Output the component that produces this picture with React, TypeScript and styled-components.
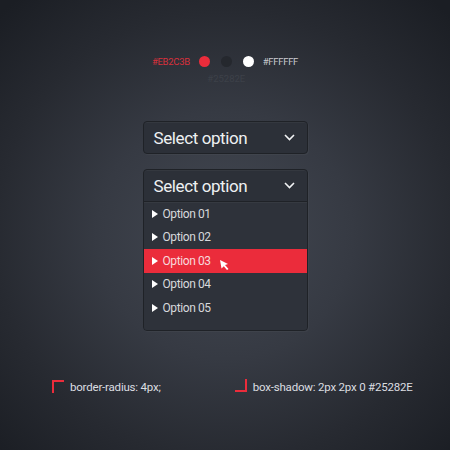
import React, { FC } from "react";
import styled, { createGlobalStyle } from "styled-components";

const GlobalStyle = createGlobalStyle`
  html, body {
    margin: 0;
    padding: 0;
  }
  body {
    width: 450px;
    height: 450px;
    overflow: hidden;
    font-family: Roboto, "Liberation Sans", sans-serif;
    background: radial-gradient(ellipse 320px 310px at 225px 235px, #434852 0%, #363a43 40%, #272a31 72%, #1b1e24 100%);
  }
`;

const Page = styled.div`
  width: 450px;
  height: 450px;
  display: flex;
  flex-direction: column;
  align-items: center;
`;

const Palette = styled.div`
  display: flex;
  align-items: center;
  gap: 11px;
  margin-top: 55px;
  height: 13px;
`;

const HexLabel = styled.span<{ $color: string; $side: "left" | "right" }>`
  font-size: 9.5px;
  letter-spacing: -0.3px;
  color: ${(p) => p.$color};
  margin: ${(p) => (p.$side === "left" ? "0 -2px 0 0" : "0 0 0 -2px")};
`;

const Swatch = styled.div<{ $color: string }>`
  position: relative;
  width: 11px;
  height: 11px;
  border-radius: 50%;
  background: ${(p) => p.$color};
`;

const SwatchCaption = styled.span`
  position: absolute;
  top: 17px;
  left: 50%;
  transform: translateX(-50%);
  font-size: 9.5px;
  color: #3d4149;
  white-space: nowrap;
`;

const Selects = styled.div`
  display: flex;
  flex-direction: column;
  gap: 15px;
  margin-top: 53px;
  width: 165px;
`;

const Box = styled.div`
  background: #2c3038;
  border: 1px solid #1f2227;
  border-radius: 4px;
  box-shadow: inset 0 1px 0 rgba(255, 255, 255, 0.04), 1px 1px 0 rgba(255, 255, 255, 0.03);
  overflow: hidden;
`;

const Header = styled.div<{ $open?: boolean }>`
  display: flex;
  align-items: center;
  justify-content: space-between;
  height: 31px;
  padding: 0 12px 0 10px;
  border-bottom: ${(p) => (p.$open ? "1px solid #1f2227" : "none")};
  color: #eef0f2;
  font-size: 17px;
  letter-spacing: -0.4px;
`;

const List = styled.div`
  display: flex;
  flex-direction: column;
  padding: 0 0 10px;
  background: #2e323a;
  box-shadow: inset 0 1px 0 rgba(255, 255, 255, 0.04);
`;

const Item = styled.div<{ $active?: boolean }>`
  position: relative;
  display: flex;
  align-items: center;
  gap: 5px;
  height: 23.5px;
  padding-left: 8px;
  font-size: 12px;
  letter-spacing: -0.4px;
  color: ${(p) => (p.$active ? "#f7d9dc" : "#d7d9dc")};
  background: ${(p) => (p.$active ? "#eb2c3b" : "transparent")};
`;

const Bullet = styled.span`
  width: 0;
  height: 0;
  border-top: 4px solid transparent;
  border-bottom: 4px solid transparent;
  border-left: 6px solid #ffffff;
`;

const Cursor = styled.svg`
  position: absolute;
  left: 75px;
  top: 10px;
`;

const Footer = styled.div`
  display: flex;
  align-items: center;
  align-self: stretch;
  margin-top: 49px;
  padding-left: 52px;
  gap: 74px;
`;

const Note = styled.div`
  display: flex;
  align-items: center;
  gap: 6px;
  font-size: 11.5px;
  letter-spacing: -0.2px;
  color: #dcdee1;
`;

const Corner = styled.span<{ $flip?: boolean }>`
  width: 10px;
  height: 11px;
  border-color: #eb2c3b;
  border-style: solid;
  border-width: ${(p) => (p.$flip ? "0 2px 2px 0" : "2px 0 0 2px")};
  margin-top: ${(p) => (p.$flip ? "-2px" : "-1px")};
`;

const Chevron: FC = () => (
  <svg width="11" height="7" viewBox="0 0 11 7">
    <path d="M1 1 L5.5 5.5 L10 1" fill="none" stroke="#f2f3f5" strokeWidth="1.6" />
  </svg>
);

const options = ["Option 01", "Option 02", "Option 03", "Option 04", "Option 05"];

const App: FC = () => (
  <>
    <GlobalStyle />
    <Page>
      <Palette>
        <HexLabel $color="#d8303c" $side="left">#EB2C3B</HexLabel>
        <Swatch $color="#eb2c3b" />
        <Swatch $color="#25282e">
          <SwatchCaption>#25282E</SwatchCaption>
        </Swatch>
        <Swatch $color="#ffffff" />
        <HexLabel $color="#c9cbcf" $side="right">#FFFFFF</HexLabel>
      </Palette>
      <Selects>
        <Box>
          <Header>
            Select option
            <Chevron />
          </Header>
        </Box>
        <Box>
          <Header $open>
            Select option
            <Chevron />
          </Header>
          <List>
            {options.map((o, i) => (
              <Item key={o} $active={i === 2}>
                <Bullet />
                {o}
                {i === 2 && (
                  <Cursor width="11" height="12" viewBox="0 0 11 12">
                    <path d="M1 1 L9 5 L6 6 L9.5 10 L8 11 L4.8 7.2 L2.5 9.5 Z" fill="#ffffff" />
                  </Cursor>
                )}
              </Item>
            ))}
          </List>
        </Box>
      </Selects>
      <Footer>
        <Note>
          <Corner />
          border-radius: 4px;
        </Note>
        <Note>
          <Corner $flip />
          box-shadow: 2px 2px 0 #25282E
        </Note>
      </Footer>
    </Page>
  </>
);

export default App;
